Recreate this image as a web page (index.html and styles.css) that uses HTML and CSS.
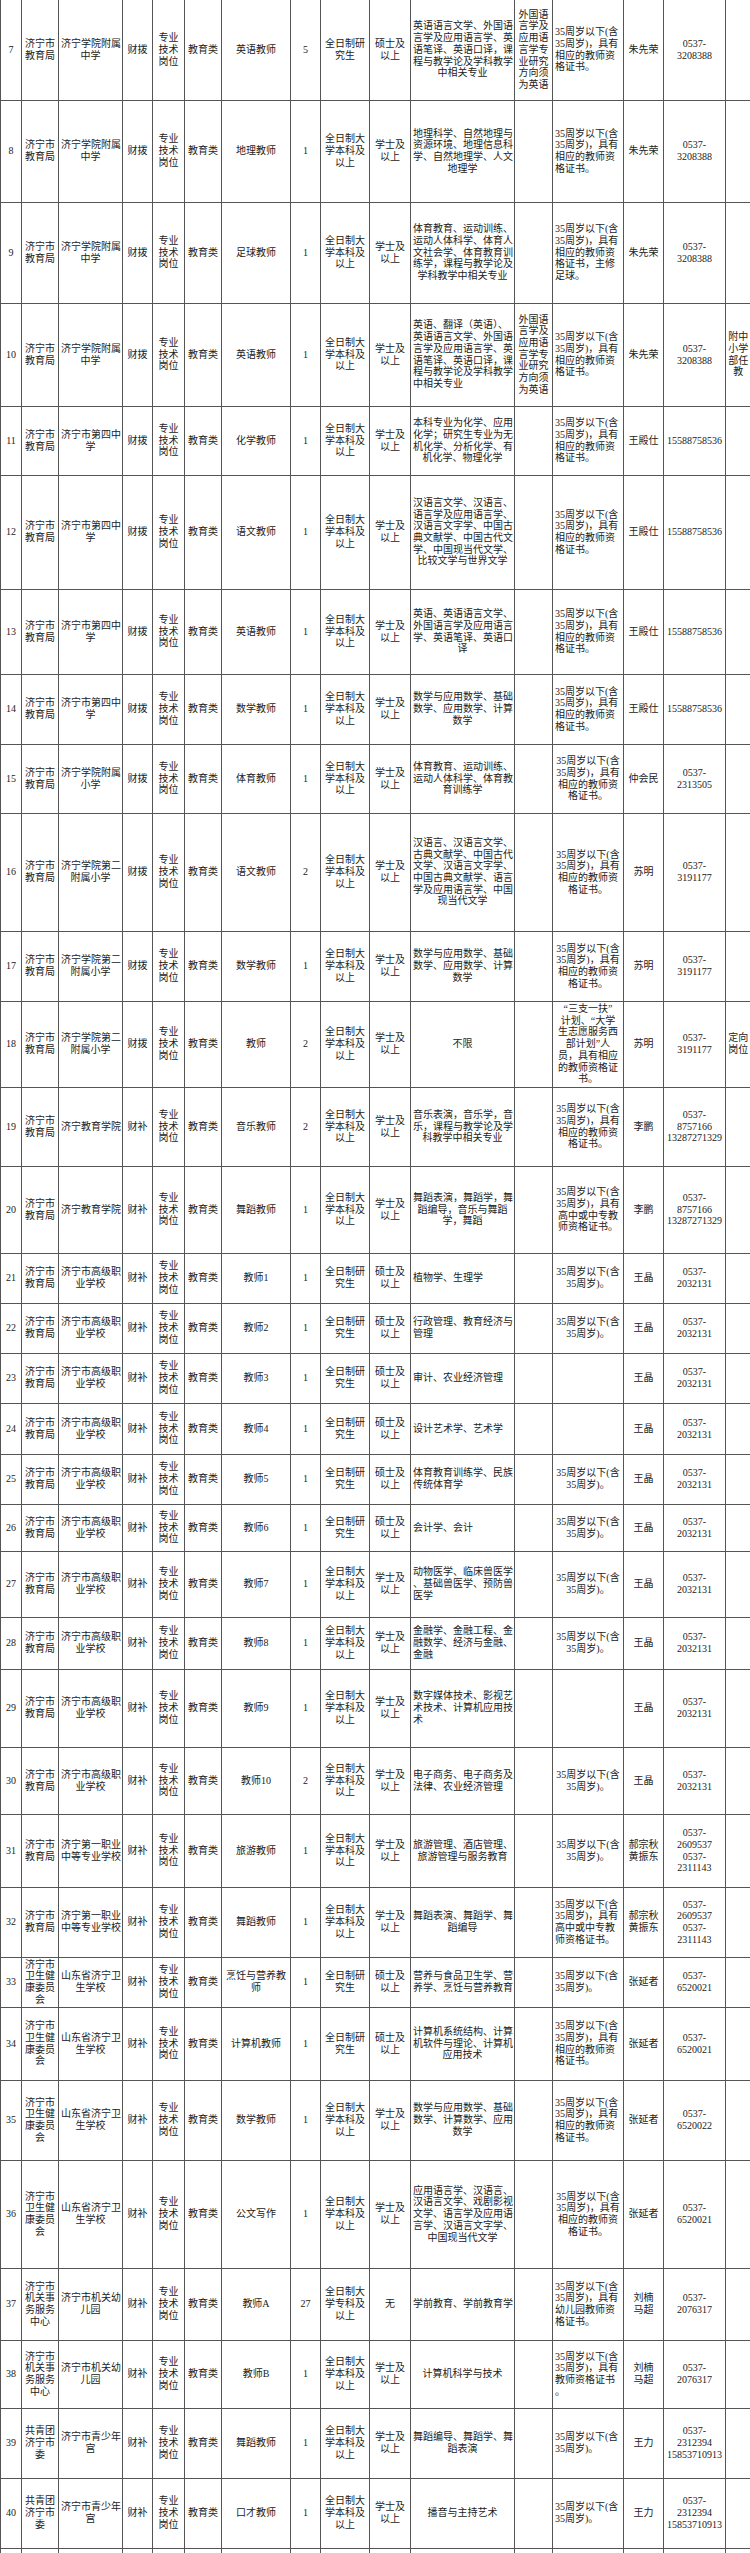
FILE: index.html
```html
<!DOCTYPE html>
<html lang="zh-CN">
<head>
<meta charset="utf-8">
<title>招聘岗位表</title>
<link rel="stylesheet" href="styles.css">
</head>
<body>
<table class="grid">
<colgroup>
<col class="c-no"><col class="c-dept"><col class="c-unit"><col class="c-fund"><col class="c-type"><col class="c-cat"><col class="c-pos"><col class="c-num"><col class="c-edu"><col class="c-deg"><col class="c-major"><col class="c-other"><col class="c-age"><col class="c-person"><col class="c-phone"><col class="c-note">
</colgroup>
<tbody>
<tr class="r7"><td>7</td><td>济宁市<br>教育局</td><td>济宁学院附属<br>中学</td><td>财拨</td><td>专业<br>技术<br>岗位</td><td>教育类</td><td>英语教师</td><td>5</td><td>全日制研<br>究生</td><td>硕士及<br>以上</td><td>英语语言文学、外国语<br>言学及应用语言学、英<br>语笔译、英语口译，课<br>程与教学论及学科教学<br>中相关专业</td><td>外国语<br>言学及<br>应用语<br>言学专<br>业研究<br>方向须<br>为英语</td><td class="l">35周岁以下(含<br>35周岁)，具有<br>相应的教师资<br>格证书。</td><td>朱先荣</td><td>0537-<br>3208388</td><td></td></tr>
<tr class="r8"><td>8</td><td>济宁市<br>教育局</td><td>济宁学院附属<br>中学</td><td>财拨</td><td>专业<br>技术<br>岗位</td><td>教育类</td><td>地理教师</td><td>1</td><td>全日制大<br>学本科及<br>以上</td><td>学士及<br>以上</td><td>地理科学、自然地理与<br>资源环境、地理信息科<br>学、自然地理学、人文<br>地理学</td><td></td><td class="l">35周岁以下(含<br>35周岁)，具有<br>相应的教师资<br>格证书。</td><td>朱先荣</td><td>0537-<br>3208388</td><td></td></tr>
<tr class="r9"><td>9</td><td>济宁市<br>教育局</td><td>济宁学院附属<br>中学</td><td>财拨</td><td>专业<br>技术<br>岗位</td><td>教育类</td><td>足球教师</td><td>1</td><td>全日制大<br>学本科及<br>以上</td><td>学士及<br>以上</td><td>体育教育、运动训练、<br>运动人体科学、体育人<br>文社会学、体育教育训<br>练学，课程与教学论及<br>学科教学中相关专业</td><td></td><td class="l">35周岁以下(含<br>35周岁)，具有<br>相应的教师资<br>格证书，主修<br>足球。</td><td>朱先荣</td><td>0537-<br>3208388</td><td></td></tr>
<tr class="r10"><td>10</td><td>济宁市<br>教育局</td><td>济宁学院附属<br>中学</td><td>财拨</td><td>专业<br>技术<br>岗位</td><td>教育类</td><td>英语教师</td><td>1</td><td>全日制大<br>学本科及<br>以上</td><td>学士及<br>以上</td><td class="l">英语、翻译（英语）、<br>英语语言文学、外国语<br>言学及应用语言学、英<br>语笔译、英语口译，课<br>程与教学论及学科教学<br>中相关专业</td><td>外国语<br>言学及<br>应用语<br>言学专<br>业研究<br>方向须<br>为英语</td><td class="l">35周岁以下(含<br>35周岁)，具有<br>相应的教师资<br>格证书。</td><td>朱先荣</td><td>0537-<br>3208388</td><td>附中<br>小学<br>部任<br>教</td></tr>
<tr class="r11"><td>11</td><td>济宁市<br>教育局</td><td>济宁市第四中<br>学</td><td>财拨</td><td>专业<br>技术<br>岗位</td><td>教育类</td><td>化学教师</td><td>1</td><td>全日制大<br>学本科及<br>以上</td><td>学士及<br>以上</td><td>本科专业为化学、应用<br>化学；研究生专业为无<br>机化学、分析化学、有<br>机化学、物理化学</td><td></td><td class="l">35周岁以下(含<br>35周岁)，具有<br>相应的教师资<br>格证书。</td><td>王殿仕</td><td>15588758536</td><td></td></tr>
<tr class="r12"><td>12</td><td>济宁市<br>教育局</td><td>济宁市第四中<br>学</td><td>财拨</td><td>专业<br>技术<br>岗位</td><td>教育类</td><td>语文教师</td><td>1</td><td>全日制大<br>学本科及<br>以上</td><td>学士及<br>以上</td><td>汉语言文学、汉语言、<br>语言学及应用语言学、<br>汉语言文字学、中国古<br>典文献学、中国古代文<br>学、中国现当代文学、<br>比较文学与世界文学</td><td></td><td class="l">35周岁以下(含<br>35周岁)，具有<br>相应的教师资<br>格证书。</td><td>王殿仕</td><td>15588758536</td><td></td></tr>
<tr class="r13"><td>13</td><td>济宁市<br>教育局</td><td>济宁市第四中<br>学</td><td>财拨</td><td>专业<br>技术<br>岗位</td><td>教育类</td><td>英语教师</td><td>1</td><td>全日制大<br>学本科及<br>以上</td><td>学士及<br>以上</td><td>英语、英语语言文学、<br>外国语言学及应用语言<br>学、英语笔译、英语口<br>译</td><td></td><td class="l">35周岁以下(含<br>35周岁)，具有<br>相应的教师资<br>格证书。</td><td>王殿仕</td><td>15588758536</td><td></td></tr>
<tr class="r14"><td>14</td><td>济宁市<br>教育局</td><td>济宁市第四中<br>学</td><td>财拨</td><td>专业<br>技术<br>岗位</td><td>教育类</td><td>数学教师</td><td>1</td><td>全日制大<br>学本科及<br>以上</td><td>学士及<br>以上</td><td>数学与应用数学、基础<br>数学、应用数学、计算<br>数学</td><td></td><td class="l">35周岁以下(含<br>35周岁)，具有<br>相应的教师资<br>格证书。</td><td>王殿仕</td><td>15588758536</td><td></td></tr>
<tr class="r15"><td>15</td><td>济宁市<br>教育局</td><td>济宁学院附属<br>小学</td><td>财拨</td><td>专业<br>技术<br>岗位</td><td>教育类</td><td>体育教师</td><td>1</td><td>全日制大<br>学本科及<br>以上</td><td>学士及<br>以上</td><td>体育教育、运动训练、<br>运动人体科学、体育教<br>育训练学</td><td></td><td>35周岁以下(含<br>35周岁)，具有<br>相应的教师资<br>格证书。</td><td>仲会民</td><td>0537-<br>2313505</td><td></td></tr>
<tr class="r16"><td>16</td><td>济宁市<br>教育局</td><td>济宁学院第二<br>附属小学</td><td>财拨</td><td>专业<br>技术<br>岗位</td><td>教育类</td><td>语文教师</td><td>2</td><td>全日制大<br>学本科及<br>以上</td><td>学士及<br>以上</td><td>汉语言、汉语言文学、<br>古典文献学、中国古代<br>文学、汉语言文字学、<br>中国古典文献学、语言<br>学及应用语言学、中国<br>现当代文学</td><td></td><td>35周岁以下(含<br>35周岁)，具有<br>相应的教师资<br>格证书。</td><td>苏明</td><td>0537-<br>3191177</td><td></td></tr>
<tr class="r17"><td>17</td><td>济宁市<br>教育局</td><td>济宁学院第二<br>附属小学</td><td>财拨</td><td>专业<br>技术<br>岗位</td><td>教育类</td><td>数学教师</td><td>1</td><td>全日制大<br>学本科及<br>以上</td><td>学士及<br>以上</td><td>数学与应用数学、基础<br>数学、应用数学、计算<br>数学</td><td></td><td>35周岁以下(含<br>35周岁)，具有<br>相应的教师资<br>格证书。</td><td>苏明</td><td>0537-<br>3191177</td><td></td></tr>
<tr class="r18"><td>18</td><td>济宁市<br>教育局</td><td>济宁学院第二<br>附属小学</td><td>财拨</td><td>专业<br>技术<br>岗位</td><td>教育类</td><td>教师</td><td>2</td><td>全日制大<br>学本科及<br>以上</td><td>学士及<br>以上</td><td>不限</td><td></td><td>“三支一扶”<br>计划、“大学<br>生志愿服务西<br>部计划”人<br>员，具有相应<br>的教师资格证<br>书。</td><td>苏明</td><td>0537-<br>3191177</td><td>定向<br>岗位</td></tr>
<tr class="r19"><td>19</td><td>济宁市<br>教育局</td><td>济宁教育学院</td><td>财补</td><td>专业<br>技术<br>岗位</td><td>教育类</td><td>音乐教师</td><td>2</td><td>全日制大<br>学本科及<br>以上</td><td>学士及<br>以上</td><td>音乐表演，音乐学，音<br>乐，课程与教学论及学<br>科教学中相关专业</td><td></td><td>35周岁以下(含<br>35周岁)，具有<br>相应的教师资<br>格证书。</td><td>李鹏</td><td>0537-<br>8757166<br>13287271329</td><td></td></tr>
<tr class="r20"><td>20</td><td>济宁市<br>教育局</td><td>济宁教育学院</td><td>财补</td><td>专业<br>技术<br>岗位</td><td>教育类</td><td>舞蹈教师</td><td>1</td><td>全日制大<br>学本科及<br>以上</td><td>学士及<br>以上</td><td>舞蹈表演，舞蹈学，舞<br>蹈编导，音乐与舞蹈<br>学，舞蹈</td><td></td><td>35周岁以下(含<br>35周岁)，具有<br>高中或中专教<br>师资格证书。</td><td>李鹏</td><td>0537-<br>8757166<br>13287271329</td><td></td></tr>
<tr class="r21"><td>21</td><td>济宁市<br>教育局</td><td>济宁市高级职<br>业学校</td><td>财补</td><td>专业<br>技术<br>岗位</td><td>教育类</td><td>教师1</td><td>1</td><td>全日制研<br>究生</td><td>硕士及<br>以上</td><td class="l">植物学、生理学</td><td></td><td>35周岁以下(含<br>35周岁)。</td><td>王晶</td><td>0537-<br>2032131</td><td></td></tr>
<tr class="r22"><td>22</td><td>济宁市<br>教育局</td><td>济宁市高级职<br>业学校</td><td>财补</td><td>专业<br>技术<br>岗位</td><td>教育类</td><td>教师2</td><td>1</td><td>全日制研<br>究生</td><td>硕士及<br>以上</td><td class="l">行政管理、教育经济与<br>管理</td><td></td><td>35周岁以下(含<br>35周岁)。</td><td>王晶</td><td>0537-<br>2032131</td><td></td></tr>
<tr class="r23"><td>23</td><td>济宁市<br>教育局</td><td>济宁市高级职<br>业学校</td><td>财补</td><td>专业<br>技术<br>岗位</td><td>教育类</td><td>教师3</td><td>1</td><td>全日制研<br>究生</td><td>硕士及<br>以上</td><td class="l">审计、农业经济管理</td><td></td><td></td><td>王晶</td><td>0537-<br>2032131</td><td></td></tr>
<tr class="r24"><td>24</td><td>济宁市<br>教育局</td><td>济宁市高级职<br>业学校</td><td>财补</td><td>专业<br>技术<br>岗位</td><td>教育类</td><td>教师4</td><td>1</td><td>全日制研<br>究生</td><td>硕士及<br>以上</td><td class="l">设计艺术学、艺术学</td><td></td><td></td><td>王晶</td><td>0537-<br>2032131</td><td></td></tr>
<tr class="r25"><td>25</td><td>济宁市<br>教育局</td><td>济宁市高级职<br>业学校</td><td>财补</td><td>专业<br>技术<br>岗位</td><td>教育类</td><td>教师5</td><td>1</td><td>全日制研<br>究生</td><td>硕士及<br>以上</td><td class="l">体育教育训练学、民族<br>传统体育学</td><td></td><td>35周岁以下(含<br>35周岁)。</td><td>王晶</td><td>0537-<br>2032131</td><td></td></tr>
<tr class="r26"><td>26</td><td>济宁市<br>教育局</td><td>济宁市高级职<br>业学校</td><td>财补</td><td>专业<br>技术<br>岗位</td><td>教育类</td><td>教师6</td><td>1</td><td>全日制研<br>究生</td><td>硕士及<br>以上</td><td class="l">会计学、会计</td><td></td><td>35周岁以下(含<br>35周岁)。</td><td>王晶</td><td>0537-<br>2032131</td><td></td></tr>
<tr class="r27"><td>27</td><td>济宁市<br>教育局</td><td>济宁市高级职<br>业学校</td><td>财补</td><td>专业<br>技术<br>岗位</td><td>教育类</td><td>教师7</td><td>1</td><td>全日制大<br>学本科及<br>以上</td><td>学士及<br>以上</td><td class="l">动物医学、临床兽医学<br>、基础兽医学、预防兽<br>医学</td><td></td><td>35周岁以下(含<br>35周岁)。</td><td>王晶</td><td>0537-<br>2032131</td><td></td></tr>
<tr class="r28"><td>28</td><td>济宁市<br>教育局</td><td>济宁市高级职<br>业学校</td><td>财补</td><td>专业<br>技术<br>岗位</td><td>教育类</td><td>教师8</td><td>1</td><td>全日制大<br>学本科及<br>以上</td><td>学士及<br>以上</td><td class="l">金融学、金融工程、金<br>融数学、经济与金融、<br>金融</td><td></td><td>35周岁以下(含<br>35周岁)。</td><td>王晶</td><td>0537-<br>2032131</td><td></td></tr>
<tr class="r29"><td>29</td><td>济宁市<br>教育局</td><td>济宁市高级职<br>业学校</td><td>财补</td><td>专业<br>技术<br>岗位</td><td>教育类</td><td>教师9</td><td>1</td><td>全日制大<br>学本科及<br>以上</td><td>学士及<br>以上</td><td class="l">数字媒体技术、影视艺<br>术技术、计算机应用技<br>术</td><td></td><td></td><td>王晶</td><td>0537-<br>2032131</td><td></td></tr>
<tr class="r30"><td>30</td><td>济宁市<br>教育局</td><td>济宁市高级职<br>业学校</td><td>财补</td><td>专业<br>技术<br>岗位</td><td>教育类</td><td>教师10</td><td>2</td><td>全日制大<br>学本科及<br>以上</td><td>学士及<br>以上</td><td class="l">电子商务、电子商务及<br>法律、农业经济管理</td><td></td><td>35周岁以下(含<br>35周岁)。</td><td>王晶</td><td>0537-<br>2032131</td><td></td></tr>
<tr class="r31"><td>31</td><td>济宁市<br>教育局</td><td>济宁第一职业<br>中等专业学校</td><td>财补</td><td>专业<br>技术<br>岗位</td><td>教育类</td><td>旅游教师</td><td>1</td><td>全日制大<br>学本科及<br>以上</td><td>学士及<br>以上</td><td>旅游管理、酒店管理、<br>旅游管理与服务教育</td><td></td><td>35周岁以下(含<br>35周岁)。</td><td>郝宗秋<br>黄振东</td><td>0537-<br>2609537<br>0537-<br>2311143</td><td></td></tr>
<tr class="r32"><td>32</td><td>济宁市<br>教育局</td><td>济宁第一职业<br>中等专业学校</td><td>财补</td><td>专业<br>技术<br>岗位</td><td>教育类</td><td>舞蹈教师</td><td>1</td><td>全日制大<br>学本科及<br>以上</td><td>学士及<br>以上</td><td>舞蹈表演、舞蹈学、舞<br>蹈编导</td><td></td><td class="l">35周岁以下(含<br>35周岁)，具有<br>高中或中专教<br>师资格证书。</td><td>郝宗秋<br>黄振东</td><td>0537-<br>2609537<br>0537-<br>2311143</td><td></td></tr>
<tr class="r33"><td>33</td><td>济宁市<br>卫生健<br>康委员<br>会</td><td>山东省济宁卫<br>生学校</td><td>财补</td><td>专业<br>技术<br>岗位</td><td>教育类</td><td>烹饪与营养教<br>师</td><td>1</td><td>全日制研<br>究生</td><td>硕士及<br>以上</td><td class="l">营养与食品卫生学、营<br>养学、烹饪与营养教育</td><td></td><td class="l">35周岁以下(含<br>35周岁)。</td><td>张延者</td><td>0537-<br>6520021</td><td></td></tr>
<tr class="r34"><td>34</td><td>济宁市<br>卫生健<br>康委员<br>会</td><td>山东省济宁卫<br>生学校</td><td>财补</td><td>专业<br>技术<br>岗位</td><td>教育类</td><td>计算机教师</td><td>1</td><td>全日制研<br>究生</td><td>硕士及<br>以上</td><td>计算机系统结构、计算<br>机软件与理论、计算机<br>应用技术</td><td></td><td class="l">35周岁以下(含<br>35周岁)，具有<br>相应的教师资<br>格证书。</td><td>张延者</td><td>0537-<br>6520021</td><td></td></tr>
<tr class="r35"><td>35</td><td>济宁市<br>卫生健<br>康委员<br>会</td><td>山东省济宁卫<br>生学校</td><td>财补</td><td>专业<br>技术<br>岗位</td><td>教育类</td><td>数学教师</td><td>1</td><td>全日制大<br>学本科及<br>以上</td><td>学士及<br>以上</td><td>数学与应用数学、基础<br>数学、计算数学、应用<br>数学</td><td></td><td class="l">35周岁以下(含<br>35周岁)，具有<br>相应的教师资<br>格证书。</td><td>张延者</td><td>0537-<br>6520022</td><td></td></tr>
<tr class="r36"><td>36</td><td>济宁市<br>卫生健<br>康委员<br>会</td><td>山东省济宁卫<br>生学校</td><td>财补</td><td>专业<br>技术<br>岗位</td><td>教育类</td><td>公文写作</td><td>1</td><td>全日制大<br>学本科及<br>以上</td><td>学士及<br>以上</td><td>应用语言学、汉语言、<br>汉语言文学、戏剧影视<br>文学、语言学及应用语<br>言学、汉语言文字学、<br>中国现当代文学</td><td></td><td>35周岁以下(含<br>35周岁)，具有<br>相应的教师资<br>格证书。</td><td>张延者</td><td>0537-<br>6520021</td><td></td></tr>
<tr class="r37"><td>37</td><td>济宁市<br>机关事<br>务服务<br>中心</td><td>济宁市机关幼<br>儿园</td><td>财补</td><td>专业<br>技术<br>岗位</td><td>教育类</td><td>教师A</td><td>27</td><td>全日制大<br>学专科及<br>以上</td><td>无</td><td>学前教育、学前教育学</td><td></td><td class="l">35周岁以下(含<br>35周岁)，具有<br>幼儿园教师资<br>格证书。</td><td>刘楠<br>马超</td><td>0537-<br>2076317</td><td></td></tr>
<tr class="r38"><td>38</td><td>济宁市<br>机关事<br>务服务<br>中心</td><td>济宁市机关幼<br>儿园</td><td>财补</td><td>专业<br>技术<br>岗位</td><td>教育类</td><td>教师B</td><td>1</td><td>全日制大<br>学本科及<br>以上</td><td>学士及<br>以上</td><td>计算机科学与技术</td><td></td><td class="l">35周岁以下(含<br>35周岁)，具有<br>教师资格证书<br>。</td><td>刘楠<br>马超</td><td>0537-<br>2076317</td><td></td></tr>
<tr class="r39"><td>39</td><td>共青团<br>济宁市<br>委</td><td>济宁市青少年<br>宫</td><td>财补</td><td>专业<br>技术<br>岗位</td><td>教育类</td><td>舞蹈教师</td><td>1</td><td>全日制大<br>学本科及<br>以上</td><td>学士及<br>以上</td><td>舞蹈编导、舞蹈学、舞<br>蹈表演</td><td></td><td class="l">35周岁以下(含<br>35周岁)。</td><td>王力</td><td>0537-<br>2312394<br>15853710913</td><td></td></tr>
<tr class="r40"><td>40</td><td>共青团<br>济宁市<br>委</td><td>济宁市青少年<br>宫</td><td>财补</td><td>专业<br>技术<br>岗位</td><td>教育类</td><td>口才教师</td><td>1</td><td>全日制大<br>学本科及<br>以上</td><td>学士及<br>以上</td><td>播音与主持艺术</td><td></td><td class="l">35周岁以下(含<br>35周岁)。</td><td>王力</td><td>0537-<br>2312394<br>15853710913</td><td></td></tr>
<tr class="tail"><td></td><td></td><td></td><td></td><td></td><td></td><td></td><td></td><td></td><td></td><td></td><td></td><td></td><td></td><td></td><td></td></tr>
</tbody>
</table>
</body>
</html>
```

FILE: styles.css
```css
html, body {
  margin: 0;
  padding: 0;
  background: #ffffff;
}

body {
  width: 750px;
  height: 2553px;
  overflow: hidden;
  font-family: "Liberation Serif", "Noto Sans CJK SC", serif;
  font-size: 10px;
  line-height: 11.7px;
  color: #222222;
}

.grid {
  border-collapse: collapse;
  table-layout: fixed;
  width: 750px;
}

.grid td {
  border: 1px solid #555555;
  padding: 0 2px;
  text-align: center;
  vertical-align: middle;
  white-space: nowrap;
}

.grid td.l {
  text-align: left;
}

.grid tr:first-child td {
  border-top: none;
}

.grid td:last-child {
  border-right: none;
}

.c-no { width: 21px; }
.c-dept { width: 37px; }
.c-unit { width: 64px; }
.c-fund { width: 30px; }
.c-type { width: 32px; }
.c-cat { width: 37px; }
.c-pos { width: 69px; }
.c-num { width: 30px; }
.c-edu { width: 49px; }
.c-deg { width: 41px; }
.c-major { width: 104px; }
.c-other { width: 38px; }
.c-age { width: 71px; }
.c-person { width: 40px; }
.c-phone { width: 62px; }
.c-note { width: 25px; }

.r7 { height: 100px; }
.r8 { height: 102px; }
.r9 { height: 101px; }
.r10 { height: 103px; }
.r11 { height: 69px; }
.r12 { height: 114px; }
.r13 { height: 85px; }
.r14 { height: 70px; }
.r15 { height: 69px; }
.r16 { height: 118px; }
.r17 { height: 70px; }
.r18 { height: 86px; }
.r19 { height: 79px; }
.r20 { height: 87px; }
.r21 { height: 50px; }
.r22 { height: 50px; }
.r23 { height: 50px; }
.r24 { height: 51px; }
.r25 { height: 50px; }
.r26 { height: 47px; }
.r27 { height: 66px; }
.r28 { height: 52px; }
.r29 { height: 78px; }
.r30 { height: 67px; }
.r31 { height: 73px; }
.r32 { height: 70px; }
.r33 { height: 50px; }
.r34 { height: 73px; }
.r35 { height: 80px; }
.r36 { height: 108px; }
.r37 { height: 72px; }
.r38 { height: 68px; }
.r39 { height: 70px; }
.r40 { height: 70px; }
.tail { height: 20px; }
```
